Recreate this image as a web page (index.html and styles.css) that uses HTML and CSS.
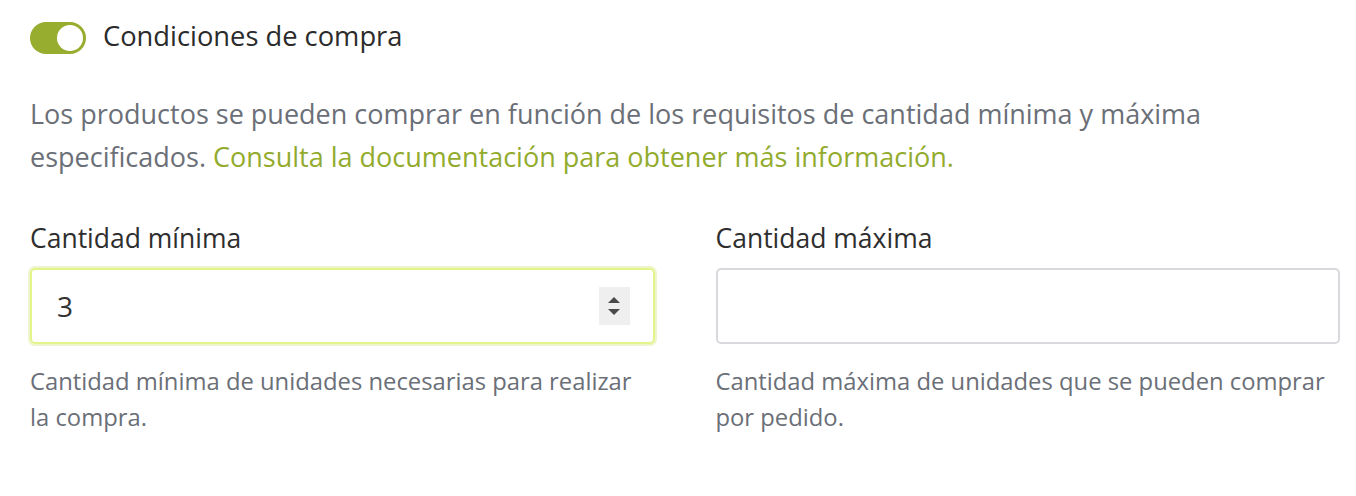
FILE: index.html
```html
<!DOCTYPE html>
<html lang="es">
<head>
<meta charset="utf-8">
<link rel="stylesheet" href="styles.css">
</head>
<body>
<div class="page">
  <div class="header">
    <span class="toggle"><span class="knob"></span></span>
    <span class="title">Condiciones de compra</span>
  </div>
  <p class="desc">Los productos se pueden comprar en función de los requisitos de cantidad mínima y máxima especificados. <a class="link" href="#">Consulta la documentación para obtener más información.</a></p>
  <div class="fields">
    <div class="field">
      <div class="label">Cantidad mínima</div>
      <div class="input focused">
        <span class="value">3</span>
        <span class="stepper">
          <svg width="16" height="28" viewBox="0 0 16 28"><path d="M8 5 L14 11 L2 11 Z" fill="#4a4a4a"/><path d="M2 17 L14 17 L8 23 Z" fill="#4a4a4a"/></svg>
        </span>
      </div>
      <div class="help">Cantidad mínima de unidades necesarias para realizar la compra.</div>
    </div>
    <div class="field">
      <div class="label">Cantidad máxima</div>
      <div class="input"></div>
      <div class="help">Cantidad máxima de unidades que se pueden comprar por pedido.</div>
    </div>
  </div>
</div>
</body>
</html>
```
FILE: styles.css
```css
html, body {
  margin: 0;
  background: #ffffff;
}
body {
  font-family: "Open Sans", "Lato", sans-serif;
}
.page {
  padding: 22px 16px 0 30px;
}
.header {
  display: flex;
  align-items: center;
  height: 32px;
}
.toggle {
  width: 56px;
  height: 32px;
  border-radius: 16px;
  background: #97ad2f;
  display: flex;
  align-items: center;
  justify-content: flex-end;
  padding: 0 3px;
  box-sizing: border-box;
}
.knob {
  width: 26px;
  height: 26px;
  border-radius: 50%;
  background: #ffffff;
}
.title {
  margin-left: 17px;
  margin-bottom: 5px;
  font-size: 27.3px;
  line-height: 36px;
  color: #2b2b2b;
}
.desc {
  margin: 38px 0 0 0;
  font-size: 27px;
  line-height: 43px;
  color: #6b6f77;
  max-width: 1200px;
}
.link {
  color: #92ab2d;
  text-decoration: none;
}
.fields {
  display: grid;
  grid-template-columns: 1fr 1fr;
  column-gap: 61px;
  margin-top: 45px;
}
.label {
  font-size: 26.5px;
  line-height: 30px;
  color: #2e2e2e;
  margin-bottom: 15px;
}
.input {
  height: 76px;
  box-sizing: border-box;
  border: 2px solid #d7d9dc;
  border-radius: 5px;
  display: flex;
  align-items: center;
  padding: 0 23px 0 25px;
}
.input.focused {
  border-color: #e2f48a;
  box-shadow: 0 0 0 2px #eef4cc;
}
.value {
  flex: 1;
  font-size: 28px;
  color: #333;
}
.stepper {
  width: 31px;
  height: 38px;
  background: #efefef;
  display: flex;
  align-items: center;
  justify-content: center;
}
.help {
  margin-top: 19px;
  padding-right: 10px;
  font-size: 23.8px;
  line-height: 36px;
  color: #6b6f77;
}
```
